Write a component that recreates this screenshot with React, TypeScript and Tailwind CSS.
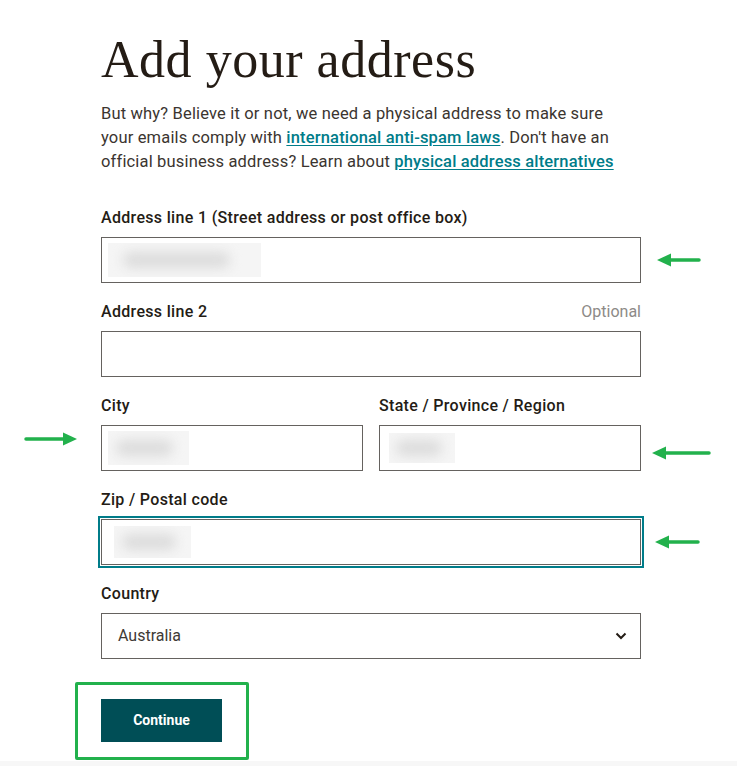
import type { ReactNode } from 'react';

const GREEN = '#22b14c';

const Arrow = ({ width, flip = false }: { width: number; flip?: boolean }) => (
  <svg
    width={width}
    height={14}
    viewBox={`0 0 ${width} 14`}
    className={flip ? '-scale-x-100' : ''}
  >
    <line x1={10} y1={7} x2={width - 2} y2={7} stroke={GREEN} strokeWidth={3.5} strokeLinecap="round" />
    <polygon points="0,7 14,0.5 14,13.5" fill={GREEN} />
  </svg>
);

const Blur = ({ w, h }: { w: number; h: number }) => (
  <div className="bg-[#f5f5f5] flex items-center overflow-hidden" style={{ width: w, height: h }}>
    <div className="h-[16px] w-[70%] ml-[10%] rounded-full bg-[#dcdcdc] blur-[6px]" />
  </div>
);

const Label = ({ children, extra }: { children: ReactNode; extra?: ReactNode }) => (
  <div className="flex items-center justify-between mb-2 h-6 pt-[2px]">
    <span className="text-[16px] tracking-[0.02em] font-medium text-[#241c15]">{children}</span>
    {extra}
  </div>
);

const Box = ({ children, focused = false }: { children?: ReactNode; focused?: boolean }) => (
  <div
    className={`h-[46px] border border-[#65625f] bg-white flex items-center px-[6px] ${
      focused ? 'outline-2 outline-offset-1 outline-[#007c89]' : ''
    }`}
  >
    {children}
  </div>
);

export default function App() {
  return (
    <div className="min-h-[766px] flex flex-col bg-white font-['Roboto',sans-serif] text-[#241c15]">
      <div className="flex-1 pl-[101px] pt-[30px]">
        <div className="w-[540px]">
          <h1 className="font-['Liberation_Serif',serif] text-[52px] leading-[60px] tracking-[0.01em] text-[#241c15]">
            Add your address
          </h1>
          <p className="mt-[12px] text-[16.5px] tracking-[0.01em] leading-6 text-[#3b3530]">
            But why? Believe it or not, we need a physical address to make sure
            <br />
            your emails comply with{' '}
            <a className="text-[#007c89] underline font-medium underline-offset-2">international anti-spam laws</a>.
            Don't have an
            <br />
            official business address? Learn about{' '}
            <a className="text-[#007c89] underline font-medium underline-offset-2">physical address alternatives</a>
          </p>

          <div className="mt-[31px] flex flex-col gap-4">
            <div>
              <Label>Address line 1 (Street address or post office box)</Label>
              <div className="relative">
                <Box>
                  <Blur w={153} h={34} />
                </Box>
                <div className="absolute left-full ml-4 top-[16px]">
                  <Arrow width={44} />
                </div>
              </div>
            </div>

            <div>
              <Label extra={<span className="text-[16px] text-[#8d8a87]">Optional</span>}>Address line 2</Label>
              <Box />
            </div>

            <div className="grid grid-cols-2 gap-4">
              <div>
                <Label>City</Label>
                <div className="relative">
                  <Box>
                    <Blur w={81} h={34} />
                  </Box>
                  <div className="absolute right-full mr-6 top-[7px]">
                    <Arrow width={53} flip />
                  </div>
                </div>
              </div>
              <div>
                <Label>State / Province / Region</Label>
                <div className="relative">
                  <Box>
                    <div className="ml-[3px]">
                      <Blur w={66} h={30} />
                    </div>
                  </Box>
                  <div className="absolute left-full ml-[11px] top-[21px]">
                    <Arrow width={59} />
                  </div>
                </div>
              </div>
            </div>

            <div>
              <Label>Zip / Postal code</Label>
              <div className="relative">
                <Box focused>
                  <div className="ml-[6px]">
                    <Blur w={77} h={32} />
                  </div>
                </Box>
                <div className="absolute left-full ml-[14px] top-[16px]">
                  <Arrow width={45} />
                </div>
              </div>
            </div>

            <div>
              <Label>Country</Label>
              <div className="h-[46px] border border-[#65625f] flex items-center justify-between pl-4 pr-[13px]">
                <span className="text-[16px] text-[#403a35]">Australia</span>
                <svg width="12" height="8" viewBox="0 0 12 8">
                  <path d="M1.5 1.5 6 6l4.5-4.5" fill="none" stroke="#241c15" strokeWidth="2" />
                </svg>
              </div>
            </div>
          </div>

          <div className="mt-[23px] -ml-[26px] w-fit rounded-[2px] border-[3px] border-[#22b14c] pl-[23px] pr-[24px] pt-[14px] pb-[15px]">
            <button className="h-[43px] w-[121px] bg-[#004e56] text-white text-[14px] font-bold">
              Continue
            </button>
          </div>
        </div>
      </div>
      <div className="h-[5px] bg-[#f7f7f7]" />
    </div>
  );
}
